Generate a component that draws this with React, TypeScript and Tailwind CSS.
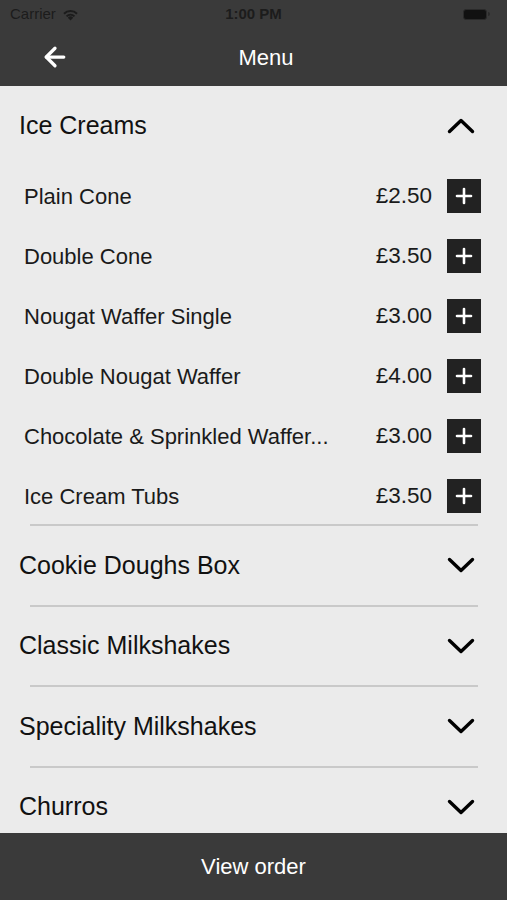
import { ArrowLeft, Plus } from 'lucide-react';

interface MenuItem {
  name: string;
  price: string;
}

interface MenuSection {
  title: string;
  items?: MenuItem[];
}

const SECTIONS: MenuSection[] = [
  {
    title: 'Ice Creams',
    items: [
      { name: 'Plain Cone', price: '£2.50' },
      { name: 'Double Cone', price: '£3.50' },
      { name: 'Nougat Waffer Single', price: '£3.00' },
      { name: 'Double Nougat Waffer', price: '£4.00' },
      { name: 'Chocolate & Sprinkled Waffer...', price: '£3.00' },
      { name: 'Ice Cream Tubs', price: '£3.50' },
    ],
  },
  { title: 'Cookie Doughs Box' },
  { title: 'Classic Milkshakes' },
  { title: 'Speciality Milkshakes' },
  { title: 'Churros' },
];

const FONT = { fontFamily: '"Liberation Sans", Arial, sans-serif' };

const StatusBar: React.FC = () => (
  <div className="relative flex h-[28px] items-center px-[10px] text-[15px] text-[#1c1c1c]">
    <div className="flex items-center gap-[6px]">
      <span>Carrier</span>
      <svg width="17" height="13" viewBox="0 0 16 12" fill="#1c1c1c">
        <path d="M8 11.6 5.5 9a3.5 3.5 0 0 1 5 0Z" />
        <path d="M3.6 7.1a6.3 6.3 0 0 1 8.8 0l-1.3 1.3a4.5 4.5 0 0 0-6.2 0Z" />
        <path d="M1.2 4.7a9.6 9.6 0 0 1 13.6 0l-1.3 1.3a7.8 7.8 0 0 0-11 0Z" />
      </svg>
    </div>
    <span className="absolute left-1/2 -translate-x-1/2 font-bold">1:00 PM</span>
    <div className="ml-auto flex items-center gap-[1px] pr-[7px]">
      <div className="h-[11px] w-[24px] rounded-[3px] border border-[#2a2a2a] bg-[#111]" />
      <div className="h-[4px] w-[2px] rounded-r-sm bg-[#2a2a2a]" />
    </div>
  </div>
);

const Chevron: React.FC<{ up?: boolean }> = ({ up }) => (
  <svg width="28" height="16" viewBox="0 0 28 16" fill="none" stroke="#000" strokeWidth="3.4" strokeLinecap="round" strokeLinejoin="round">
    <path d={up ? 'M2.5 13.5 14 2.5l11.5 11' : 'M2.5 2.5 14 13.5l11.5-11'} />
  </svg>
);

const ItemRow: React.FC<{ item: MenuItem }> = ({ item }) => (
  <div className="flex h-[60px] items-center pl-[24px] pr-[26px]">
    <span className="min-w-0 flex-1 whitespace-nowrap text-[22px] text-[#1a1a1a]">{item.name}</span>
    <span className="ml-auto text-[22.5px] text-[#1a1a1a]">{item.price}</span>
    <button className="ml-[15px] flex h-[34px] w-[34px] items-center justify-center bg-[#222222]">
      <Plus className="h-[24px] w-[24px] text-white" strokeWidth={2.6} />
    </button>
  </div>
);

const Section: React.FC<{ section: MenuSection; first: boolean; last: boolean }> = ({ section, first, last }) => {
  const open = !!section.items;
  return (
    <div>
      <div className={`flex items-center pl-[19px] pr-[32px] ${first ? 'h-[80px]' : 'h-[78.5px]'}`}>
        <span className="text-[25px] text-[#111]">{section.title}</span>
        <span className="ml-auto flex">
          <Chevron up={open} />
        </span>
      </div>
      {section.items?.map((item) => <ItemRow key={item.name} item={item} />)}
      {!last && <div className={`ml-[30px] mr-[29px] h-[2px] bg-[#c9c9c9] ${open ? '-mt-[2px]' : ''}`} />}
    </div>
  );
};

export default function App() {
  return (
    <div className="flex h-[900px] w-full flex-col bg-[#ebebeb]" style={FONT}>
      <header className="bg-[#3a3a3a]">
        <StatusBar />
        <div className="relative flex h-[58px] items-center px-[40px]">
          <ArrowLeft className="h-[30px] w-[30px] text-white" strokeWidth={2.6} />
          <span className="absolute left-[266px] -translate-x-1/2 text-[22px] text-white">Menu</span>
        </div>
      </header>
      <main className="flex-1 overflow-hidden">
        {SECTIONS.map((s, i) => (
          <Section key={s.title} section={s} first={i === 0} last={i === SECTIONS.length - 1} />
        ))}
      </main>
      <footer className="flex h-[67px] items-center justify-center bg-[#3a3a3a]">
        <span className="text-[22px] text-white">View order</span>
      </footer>
    </div>
  );
}
